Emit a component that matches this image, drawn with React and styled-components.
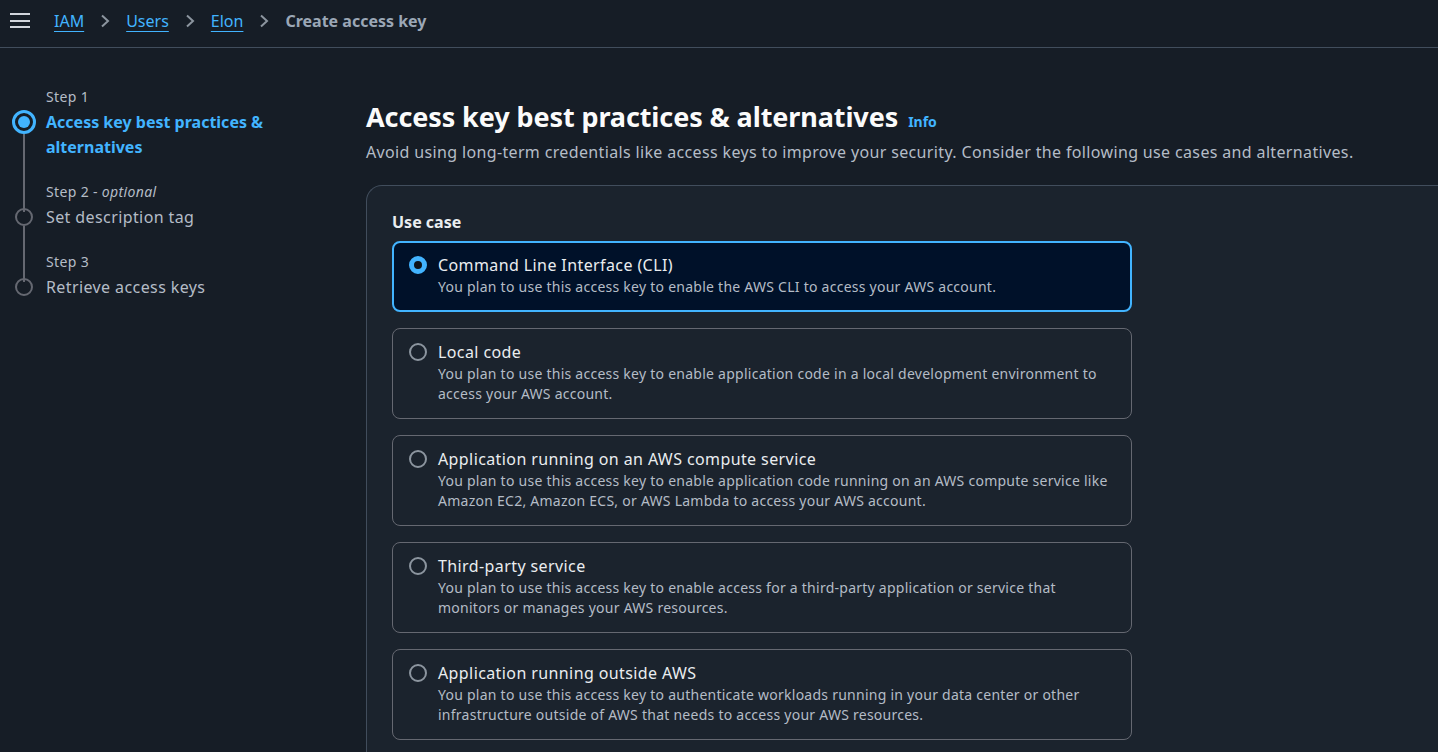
import styled, { createGlobalStyle } from "styled-components"

const GlobalStyle = createGlobalStyle`
  html, body {
    margin: 0;
    background: #161d26;
    overflow: hidden;
  }
  body {
    font-family: "Noto Sans", "Open Sans", sans-serif;
    color: #d1d5db;
    letter-spacing: 0.022em;
  }
`

const Page = styled.div`
  width: 1438px;
  height: 752px;
  background: #161d26;
  overflow: hidden;
`

const TopBar = styled.header`
  height: 48px;
  box-sizing: border-box;
  display: flex;
  align-items: center;
  border-bottom: 1px solid #414d5c;
  padding: 0 0 6px 10px;
`

const Burger = styled.button`
  width: 20px;
  height: 15px;
  padding: 0;
  border: none;
  background: none;
  display: flex;
  flex-direction: column;
  justify-content: space-between;
  margin-right: 24px;
  span {
    display: block;
    height: 2px;
    background: #d1d5db;
  }
`

const Crumbs = styled.nav`
  display: flex;
  align-items: center;
  gap: 15px;
  font-size: 16px;
  letter-spacing: 0;
`

const CrumbLink = styled.a`
  color: #42b4ff;
  text-decoration: underline;
  text-underline-offset: 4px;
  text-decoration-thickness: 1px;
`

const CrumbCurrent = styled.span`
  color: #9ba7b6;
  font-weight: 700;
`

const Chevron = () => (
  <svg width="12" height="14" viewBox="0 0 12 14" fill="none">
    <path d="M3 1.5l6 5.5-6 5.5" stroke="#8c959f" strokeWidth="2" />
  </svg>
)

const Body = styled.div`
  display: flex;
`

const Steps = styled.ol`
  list-style: none;
  margin: 0;
  padding: 39px 0 0 12px;
  width: 354px;
  flex-shrink: 0;
`

const Step = styled.li`
  display: grid;
  grid-template-columns: 34px 1fr;
  position: relative;
  padding-bottom: 22px;
`

const StepLabel = styled.div`
  grid-column: 2;
  font-size: 14px;
  color: #b4bcc6;
  line-height: 20px;
  margin-bottom: 3px;
  em {
    font-style: italic;
  }
`

const Dot = styled.span`
  grid-column: 1;
  grid-row: 2;
  width: ${p => (p.$active ? "24px" : "18px")};
  height: ${p => (p.$active ? "24px" : "18px")};
  margin-top: ${p => (p.$active ? "0" : "3px")};
  margin-left: ${p => (p.$active ? "0" : "3px")};
  border-radius: 50%;
  box-sizing: border-box;
  border: ${p => (p.$active ? "3px solid #42b4ff" : "2px solid #656871")};
  display: flex;
  align-items: center;
  justify-content: center;
  &::after {
    content: "";
    display: ${p => (p.$active ? "block" : "none")};
    width: 12px;
    height: 12px;
    border-radius: 50%;
    background: #42b4ff;
  }
`

const Connector = styled.span`
  position: absolute;
  left: 11px;
  width: 2px;
  background: #656871;
  top: ${p => p.$top}px;
  bottom: ${p => p.$bottom}px;
`

const StepTitle = styled.div`
  grid-column: 2;
  grid-row: 2;
  font-size: 16px;
  line-height: 25px;
  color: ${p => (p.$active ? "#42b4ff" : "#b4bcc6")};
  font-weight: ${p => (p.$active ? 700 : 400)};
  letter-spacing: ${p => (p.$active ? "0" : "0.025em")};
`

const Main = styled.main`
  flex: 1;
  padding-top: 51px;
`

const Title = styled.h1`
  margin: 0;
  font-size: 27px;
  line-height: 36px;
  font-weight: 700;
  letter-spacing: -0.1px;
  color: #fbfbfb;
  display: flex;
  align-items: baseline;
  gap: 10px;
`

const InfoLink = styled.a`
  font-size: 14px;
  font-weight: 700;
  letter-spacing: 0;
  color: #42b4ff;
`

const Subtitle = styled.p`
  margin: 1px 0 0;
  font-size: 16px;
  line-height: 22px;
  color: #b4bcc6;
`

const Card = styled.section`
  margin-top: 22px;
  background: #1b232d;
  border: 1px solid #414d5c;
  border-right: none;
  border-radius: 16px 0 0 0;
  padding: 25px 0 20px 25px;
  min-height: 600px;
`

const FieldLabel = styled.div`
  font-size: 16px;
  font-weight: 700;
  letter-spacing: 0;
  color: #eaedf0;
  line-height: 22px;
  margin-bottom: 8px;
`

const Tiles = styled.div`
  display: flex;
  flex-direction: column;
  gap: 16px;
  width: 740px;
`

const Tile = styled.label`
  display: grid;
  grid-template-columns: 29px 1fr;
  padding: ${p => (p.$selected ? "10px 20px 13px 15px" : "11px 20px 14px 16px")};
  border-radius: 8px;
  border: ${p => (p.$selected ? "2px solid #42b4ff" : "1px solid #656871")};
  background: ${p => (p.$selected ? "#001129" : "transparent")};
  cursor: pointer;
`

const Radio = styled.span`
  width: 18px;
  height: 18px;
  margin-top: 3px;
  box-sizing: border-box;
  border-radius: 50%;
  border: ${p => (p.$checked ? "5px solid #42b4ff" : "2px solid #8c959f")};
  background: ${p => (p.$checked ? "#0f141a" : "transparent")};
`

const TileTitle = styled.div`
  font-size: 16px;
  line-height: 24px;
  letter-spacing: 0.025em;
  color: #eaedf0;
`

const TileText = styled.div`
  font-size: 14px;
  line-height: 20px;
  letter-spacing: 0.018em;
  color: #b4bcc6;
`

const useCases = [
  {
    title: "Command Line Interface (CLI)",
    text: "You plan to use this access key to enable the AWS CLI to access your AWS account.",
  },
  {
    title: "Local code",
    text: "You plan to use this access key to enable application code in a local development environment to access your AWS account.",
  },
  {
    title: "Application running on an AWS compute service",
    text: "You plan to use this access key to enable application code running on an AWS compute service like Amazon EC2, Amazon ECS, or AWS Lambda to access your AWS account.",
  },
  {
    title: "Third-party service",
    text: "You plan to use this access key to enable access for a third-party application or service that monitors or manages your AWS resources.",
  },
  {
    title: "Application running outside AWS",
    text: "You plan to use this access key to authenticate workloads running in your data center or other infrastructure outside of AWS that needs to access your AWS resources.",
  },
]

const App = () => {
  const selected = 0
  return (
    <Page>
      <GlobalStyle />
      <TopBar>
        <Burger aria-label="Menu">
          <span />
          <span />
          <span />
        </Burger>
        <Crumbs>
          <CrumbLink>IAM</CrumbLink>
          <Chevron />
          <CrumbLink>Users</CrumbLink>
          <Chevron />
          <CrumbLink>Elon</CrumbLink>
          <Chevron />
          <CrumbCurrent>Create access key</CrumbCurrent>
        </Crumbs>
      </TopBar>
      <Body>
        <Steps>
          <Step>
            <StepLabel>Step 1</StepLabel>
            <Dot $active />
            <StepTitle $active>
              Access key best practices &amp;
              <br />
              alternatives
            </StepTitle>
            <Connector $top={47} $bottom={-30} />
          </Step>
          <Step>
            <StepLabel>
              Step 2 - <em>optional</em>
            </StepLabel>
            <Dot />
            <StepTitle>Set description tag</StepTitle>
            <Connector $top={44} $bottom={-30} />
          </Step>
          <Step>
            <StepLabel>Step 3</StepLabel>
            <Dot />
            <StepTitle>Retrieve access keys</StepTitle>
          </Step>
        </Steps>
        <Main>
          <Title>
            Access key best practices &amp; alternatives
            <InfoLink>Info</InfoLink>
          </Title>
          <Subtitle>
            Avoid using long-term credentials like access keys to improve your security. Consider the following use
            cases and alternatives.
          </Subtitle>
          <Card>
            <FieldLabel>Use case</FieldLabel>
            <Tiles>
              {useCases.map((u, i) => (
                <Tile key={u.title} $selected={i === selected}>
                  <Radio $checked={i === selected} />
                  <div>
                    <TileTitle>{u.title}</TileTitle>
                    <TileText>{u.text}</TileText>
                  </div>
                </Tile>
              ))}
            </Tiles>
          </Card>
        </Main>
      </Body>
    </Page>
  )
}

export default App
